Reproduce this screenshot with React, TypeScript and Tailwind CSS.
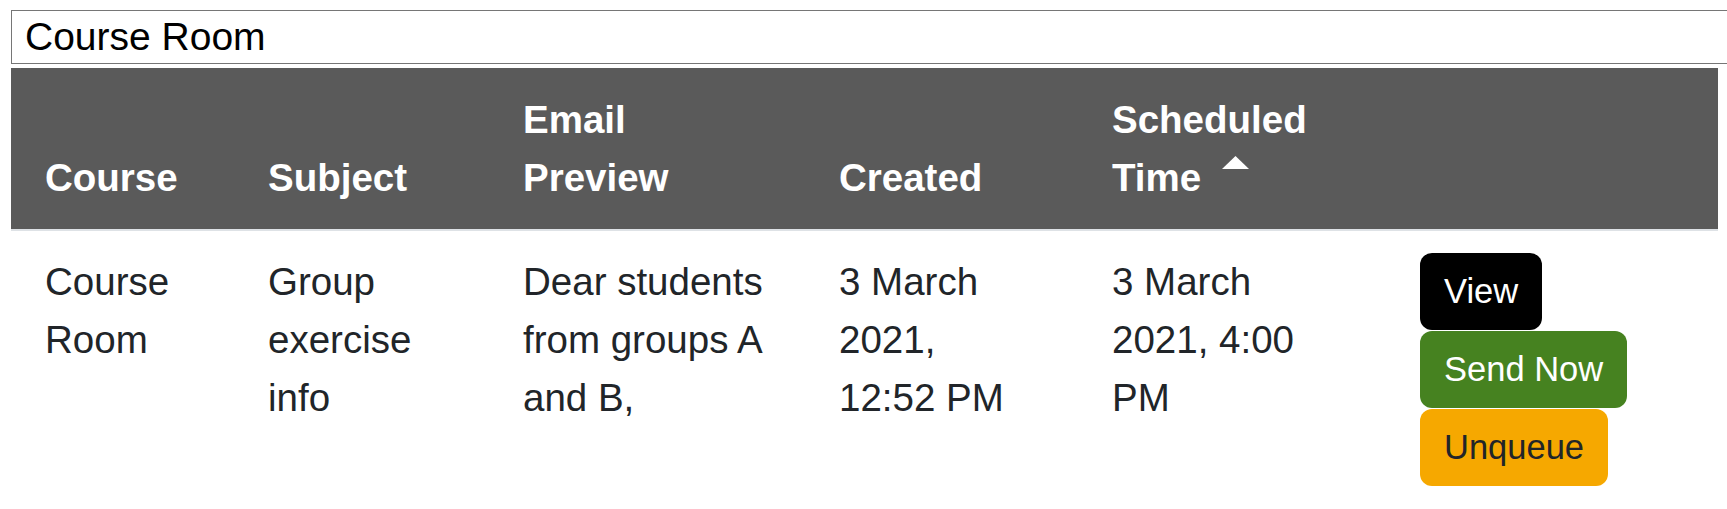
import React from "react";

const cols = "grid grid-cols-[223px_255px_316px_273px_308px_332px]";

function SortCaret() {
  return (
    <svg
      viewBox="0 0 27 13"
      className="inline-block w-[27px] h-[13px] ml-[21px] align-[22px]"
      aria-hidden="true"
    >
      <path d="M13.5 0 L27 13 L0 13 Z" fill="#ffffff" />
    </svg>
  );
}

export default function App() {
  const headers: React.ReactNode[] = [
    "Course",
    "Subject",
    <>
      Email
      <br />
      Preview
    </>,
    "Created",
    <>
      Scheduled
      <br />
      Time
      <SortCaret />
    </>,
    "",
  ];

  const row = [
    "Course Room",
    "Group exercise info",
    "Dear students from groups A and B,",
    "3 March 2021, 12:52 PM",
    "3 March 2021, 4:00 PM",
  ];

  return (
    <div className="w-screen overflow-hidden bg-white font-['Liberation_Sans',Arial,sans-serif] text-[#212529]">
      <div className="pt-[10px] pl-[11px]">
        <input
          readOnly
          value="Course Room"
          className="block w-[1740px] h-[54px] border border-[#767676] px-[13px] text-[39px] leading-normal text-black outline-none"
        />

        <div className="mt-[4px] w-[1707px]">
          {/* table head */}
          <div className={`${cols} h-[163px] bg-[#5a5a5a] border-b-2 border-[#dee2e6]`}>
            {headers.map((h, i) => (
              <div
                key={i}
                className="flex items-end pl-[34px] pb-[22px] text-[38.5px] leading-[58px] font-bold text-white"
              >
                <div>{h}</div>
              </div>
            ))}
          </div>

          {/* table body */}
          <div className={`${cols}`}>
            {row.map((c, i) => (
              <div
                key={i}
                className="pl-[34px] pr-[38px] pt-[22px] pb-[22px] text-[38.5px] leading-[58px]"
              >
                {c}
              </div>
            ))}
            <div className="flex flex-col items-start gap-px pl-[34px] pt-[22px]">
              <button className="h-[77px] px-[24px] rounded-[12px] bg-black text-white text-[34.5px] leading-none">
                View
              </button>
              <button className="h-[77px] px-[24px] rounded-[12px] bg-[#468220] text-white text-[34.5px] leading-none">
                Send Now
              </button>
              <button className="h-[77px] px-[24px] rounded-[12px] bg-[#f6a800] text-[#212529] text-[34.5px] leading-none">
                Unqueue
              </button>
            </div>
          </div>
        </div>
      </div>
    </div>
  );
}
